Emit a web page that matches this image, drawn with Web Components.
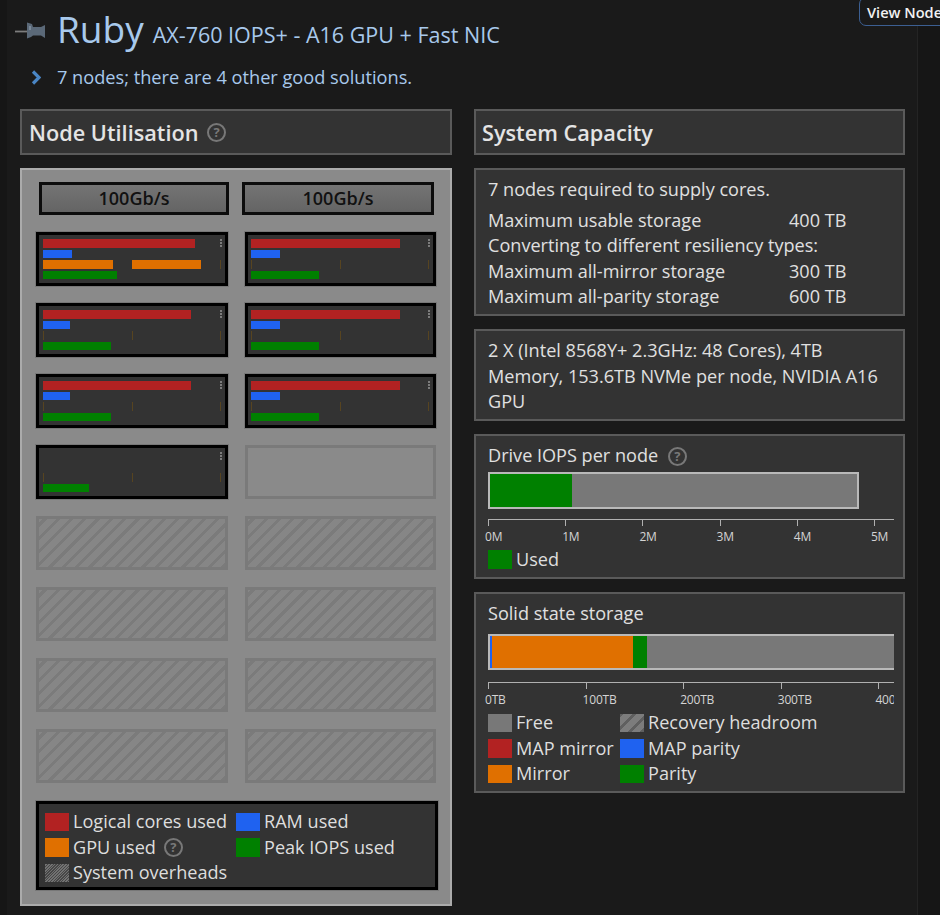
<!DOCTYPE html>
<html>
<head>
<meta charset="utf-8">
<style>
  html, body { margin: 0; height: 915px; overflow: hidden; background: #161616; }
  body { font-family: "Open Sans", "Liberation Sans", sans-serif; color: #e2e2e2; }
</style>
</head>
<body>
<sizer-app>
  <sizer-title slot="title" name="Ruby" spec="AX-760 IOPS+ - A16 GPU + Fast NIC" summary="7 nodes; there are 4 other good solutions."></sizer-title>

  <sizer-heading slot="left">Node Utilisation <sizer-help></sizer-help></sizer-heading>
  <node-panel slot="left">
    <net-box slot="net">100Gb/s</net-box>
    <net-box slot="net">100Gb/s</net-box>
    <node-card cpu="152" ram="29" gpu="71,70" iops="74"></node-card>
    <node-card inset="3" cpu="149" ram="29" iops="68"></node-card>
    <node-card cpu="148" ram="27" iops="68"></node-card>
    <node-card inset="3" cpu="149" ram="29" iops="68"></node-card>
    <node-card cpu="148" ram="27" iops="68"></node-card>
    <node-card inset="3" cpu="149" ram="29" iops="68"></node-card>
    <node-card iops="46"></node-card>
    <node-card kind="empty"></node-card>
    <node-card kind="hatch"></node-card>
    <node-card kind="hatch"></node-card>
    <node-card kind="hatch"></node-card>
    <node-card kind="hatch"></node-card>
    <node-card kind="hatch"></node-card>
    <node-card kind="hatch"></node-card>
    <node-card kind="hatch"></node-card>
    <node-card kind="hatch"></node-card>
    <legend-key slot="legend" color="#b22222">Logical cores used</legend-key>
    <legend-key slot="legend" color="#1f62f0">RAM used</legend-key>
    <legend-key slot="legend" color="#e07000">GPU used <sizer-help style="margin-left:8px"></sizer-help></legend-key>
    <legend-key slot="legend" color="#008000">Peak IOPS used</legend-key>
    <legend-key slot="legend" pattern="fine">System overheads</legend-key>
  </node-panel>

  <sizer-heading slot="right" style="padding-left:6px">System Capacity</sizer-heading>
  <info-box slot="right" style="height:148px">
    <div style="margin-bottom:5px">7 nodes required to supply cores.</div>
    <stat-row label="Maximum usable storage" value="400 TB"></stat-row>
    <div>Converting to different resiliency types:</div>
    <stat-row label="Maximum all-mirror storage" value="300 TB"></stat-row>
    <stat-row label="Maximum all-parity storage" value="600 TB"></stat-row>
  </info-box>
  <info-box slot="right" style="height:92px">2 X (Intel 8568Y+ 2.3GHz: 48 Cores), 4TB Memory, 153.6TB NVMe per node, NVIDIA A16 GPU</info-box>
  <info-box slot="right" style="height:145px">
    <usage-chart bar-width="371" bar-height="37" closed segments="#008000:82" ticks="0M,1M,2M,3M,4M,5M" step="77.2" gap="3" axis-gap="10">
      <span slot="title">Drive IOPS per node <sizer-help style="margin-left:5px;vertical-align:1px"></sizer-help></span>
      <legend-key color="#008000">Used</legend-key>
    </usage-chart>
  </info-box>
  <info-box slot="right" style="height:201px">
    <usage-chart bar-width="406" bar-height="36" segments="#1f62f0:1.5,#e07000:141.5,#008000:14" ticks="0TB,100TB,200TB,300TB,400TB" step="97.6" gap="7" axis-gap="12.5">
      <span slot="title">Solid state storage</span>
      <legend-key color="#787878">Free</legend-key>
      <legend-key pattern="wide">Recovery headroom</legend-key>
      <legend-key color="#b22222">MAP mirror</legend-key>
      <legend-key color="#1f62f0">MAP parity</legend-key>
      <legend-key color="#e07000">Mirror</legend-key>
      <legend-key color="#008000">Parity</legend-key>
    </usage-chart>
  </info-box>

  <view-button slot="overlay">View Node</view-button>
</sizer-app>

<script>
const define = (name, css, html, extra = {}) => {
  customElements.define(name, class extends HTMLElement {
    constructor () {
      super()
      this.attachShadow({ mode: 'open' }).innerHTML = `<style>${css}</style>${html}`
    }
    connectedCallback () {
      if (extra.render) extra.render.call(this, this.shadowRoot)
    }
  })
}

define('sizer-app', `
  :host { display: block; position: relative; width: 940px; height: 915px; overflow: hidden; }
  main { box-sizing: border-box; margin-left: 7px; width: 911px; height: 915px; background: #1a1a1a;
    border-right: 1px solid #242424; padding-left: 13px; }
  .cols { display: grid; grid-template-columns: 432px 431px; column-gap: 22px; margin-top: 0; }
  .col { display: flex; flex-direction: column; gap: 13px; }
`, `
  <main>
    <slot name="title"></slot>
    <div class="cols">
      <div class="col"><slot name="left"></slot></div>
      <div class="col"><slot name="right"></slot></div>
    </div>
  </main>
  <slot name="overlay"></slot>
`)

define('sizer-title', `
  :host { display: block; height: 109px; color: #a8c9ec; margin-left: -13px; }
  .top { display: flex; align-items: baseline; height: 58px; }
  svg.pin { align-self: flex-start; margin: 22px 11px 0 8px; flex: none; }
  .name { font-size: 37px; line-height: 58px; }
  .spec { font-size: 21.5px; margin-left: 9px; }
  .sub { display: flex; align-items: center; height: 38px; font-size: 18.2px; margin-top: 0; }
  .sub svg { margin: 0 16px 0 24px; }
`, `
  <div class="top">
    <svg class="pin" width="31" height="18" viewBox="0 0 31 18">
      <path d="M0 9.5 H13" stroke="#7d7d7d" stroke-width="1.8"/>
      <path d="M12 0.5 L17 2 L18 5 H26 L30 3 V16 L26 13.5 H18 L16 15 L12 16.5 Z" fill="#5b6978"/>
      <path d="M15 4 V8" stroke="#8494a4" stroke-width="1.5"/>
    </svg>
    <span class="name"></span><span class="spec"></span>
  </div>
  <div class="sub">
    <svg width="10" height="15" viewBox="0 0 10 15"><path d="M2 1.5 L8 7.5 L2 13.5" fill="none" stroke="#4a86c5" stroke-width="3.2"/></svg>
    <span class="summary"></span>
  </div>
`, {
  render (root) {
    root.querySelector('.name').textContent = this.getAttribute('name')
    root.querySelector('.spec').textContent = this.getAttribute('spec')
    root.querySelector('.summary').textContent = this.getAttribute('summary')
  }
})

define('sizer-heading', `
  :host { box-sizing: border-box; display: flex; align-items: center; height: 46px; background: #333; padding-top: 1px;
    border: 2px solid #5a5a5a; padding-left: 7px; font-size: 21.7px; font-weight: 600; color: #e4e4e4; white-space: pre; }
  ::slotted(sizer-help) { margin-left: 3px; }
`, `<slot></slot>`)

define('sizer-help', `
  :host { display: inline-flex; box-sizing: border-box; width: 19px; height: 19px; border: 2px solid #787878; border-radius: 50%;
    align-items: center; justify-content: center; vertical-align: -3px; color: #787878; font-size: 13px; font-weight: 700; line-height: 1;
    font-family: "Open Sans", sans-serif; }
`, `?`)

define('node-panel', `
  :host { display: block; box-sizing: border-box; height: 738px; background: #8a8a8a; border: 2px solid #ababab; padding: 12px 12px 0 14px; }
  .net { display: grid; grid-template-columns: 190px 192px; column-gap: 13px; margin: 0 0 17px 3px; }
  .grid { display: grid; grid-template-columns: 192px 191px; column-gap: 17px; row-gap: 17px; }
  .legend { box-sizing: border-box; width: 402px; height: 89px; margin-top: 18px; background: #333; border: 3px solid #000;
    box-shadow: 0 0 0 1px #777; padding: 5px 0 0 6px; display: grid; grid-template-columns: 191px auto; grid-auto-rows: 25.5px; }
`, `
  <div class="net"><slot name="net"></slot></div>
  <div class="grid"><slot></slot></div>
  <div class="legend"><slot name="legend"></slot></div>
`)

define('net-box', `
  :host { display: flex; box-sizing: border-box; height: 33px; padding-bottom: 2px; align-items: center; justify-content: center; background: linear-gradient(#747474, #646464);
    border: 3px solid #0c0c0c; font-size: 18px; font-weight: 600; color: #111; }
`, `<slot></slot>`)

define('node-card', `
  :host { display: block; box-sizing: border-box; height: 54px; position: relative; }
  .live { box-sizing: border-box; height: 54px; background: #333; border: 3px solid #000; box-shadow: 0 0 0 1px #777;
    padding: 4px 0 0 4px; display: grid; grid-auto-rows: 8.5px; row-gap: 2px; }
  .bar { height: 100%; }
  .gpu { display: flex; }
  .gpu div { width: 88.7px; height: 100%; box-sizing: border-box; border-left: 1.5px solid #574420; flex: none; }
  .gpu i { display: block; height: 100%; background: #e07000; }
  .dots { position: absolute; right: 6px; top: 7px; width: 2px; height: 8px;
    background: repeating-linear-gradient(#7c7c7c 0 2px, transparent 2px 3.2px); }
  .empty, .hatch { box-sizing: border-box; height: 54px; border: 3px solid #7a7a7a; background: #8a8a8a; }
  .hatch { background: repeating-linear-gradient(-45deg, #7b7b7b 0 3px, #868686 3px 9.4px); }
`, ``, {
  render (root) {
    const kind = this.getAttribute('kind')
    const wrap = document.createElement('div')
    if (kind) {
      wrap.className = kind
    } else {
      wrap.className = 'live'
      wrap.style.paddingLeft = (this.getAttribute('inset') || 4) + 'px'
      const gpu = (this.getAttribute('gpu') || '').split(',').filter(Boolean)
      const widths = [gpu[0], gpu[1], '']
      wrap.innerHTML = `
        <div class="bar" style="width:${this.getAttribute('cpu') || 0}px;background:#b22222"></div>
        <div class="bar" style="width:${this.getAttribute('ram') || 0}px;background:#1f62f0"></div>
        <div class="gpu">${widths.map(w => w
          ? `<div style="border-color:#e07000"><i style="width:${w - 2}px"></i></div>`
          : '<div></div>').join('')}</div>
        <div class="bar" style="width:${this.getAttribute('iops') || 0}px;background:#008000"></div>
        <span class="dots"></span>`
    }
    root.appendChild(wrap)
  }
})

define('legend-key', `
  :host { display: flex; align-items: center; font-size: 18.1px; white-space: nowrap; line-height: 25.5px; height: 25.5px; color: #dedede; }
  .sw { flex: none; box-sizing: border-box; width: 24px; height: 18.5px; margin-right: 4px; }
  .fine { background: repeating-linear-gradient(-45deg, #727272 0 1px, #474747 1px 2px); }
  .wide { background: repeating-linear-gradient(-45deg, #5f5f5f 0 3px, #7c7c7c 3px 9px); }
`, `<span class="sw"></span><slot></slot>`, {
  render (root) {
    const sw = root.querySelector('.sw')
    const pattern = this.getAttribute('pattern')
    if (pattern) sw.className = 'sw ' + pattern
    else sw.style.background = this.getAttribute('color')
  }
})

define('info-box', `
  :host { display: block; box-sizing: border-box; background: #333; border: 2px solid #5a5a5a; padding: 7px 9px 4px 12px;
    font-size: 18.1px; line-height: 25.5px; color: #e0e0e0; }
`, `<slot></slot>`)

define('stat-row', `
  :host { display: grid; grid-template-columns: 301px auto; }
`, `<span class="l"></span><span class="v"></span>`, {
  render (root) {
    root.querySelector('.l').textContent = this.getAttribute('label')
    root.querySelector('.v').textContent = this.getAttribute('value')
  }
})

define('usage-chart', `
  :host { display: block; }
  .clip { width: 406px; overflow: hidden; margin-left: -3px; padding-left: 3px; }
  .bar { display: flex; box-sizing: border-box; background: #787878; border: 2px solid #b9b9b9; }
  :host(:not([closed])) .bar { border-right: 0; }
  .bar i { display: block; height: 100%; }
  .axis { display: flex; height: 8px; border-top: 1.5px solid #b0b0b0; box-sizing: border-box; width: 406px; }
  .axis b { display: block; box-sizing: border-box; flex: none; border-left: 1.5px solid #b0b0b0; height: 6px; }
  .labels { display: flex; font-size: 12px; letter-spacing: -0.2px; line-height: 16px; color: #d4d4d4; margin: 2px 0 0 -3px; white-space: nowrap; width: 409px; overflow: hidden; }
  .labels span { flex: none; }
  .title { display: block; }
  .keys { display: grid; grid-template-columns: 132px auto; margin-top: 2px; }
`, `
  <slot class="title" name="title"></slot>
  <div class="clip">
    <div class="bar"></div>
    <div class="axis"></div>
    <div class="labels"></div>
  </div>
  <div class="keys"><slot></slot></div>
`, {
  render (root) {
    const bar = root.querySelector('.bar')
    bar.style.width = this.getAttribute('bar-width') + 'px'
    bar.style.height = this.getAttribute('bar-height') + 'px'
    bar.style.marginTop = this.getAttribute('gap') + 'px'
    this.getAttribute('segments').split(',').forEach(s => {
      const [color, width] = s.split(':')
      const seg = document.createElement('i')
      seg.style.cssText = `width:${width}px;background:${color}`
      bar.appendChild(seg)
    })
    const step = +this.getAttribute('step')
    const axis = root.querySelector('.axis')
    const labels = root.querySelector('.labels')
    axis.style.marginTop = this.getAttribute('axis-gap') + 'px'
    this.getAttribute('ticks').split(',').forEach(t => {
      const tick = document.createElement('b')
      tick.style.width = step + 'px'
      axis.appendChild(tick)
      const label = document.createElement('span')
      label.style.width = step + 'px'
      label.textContent = t
      labels.appendChild(label)
    })
  }
})

define('view-button', `
  :host { position: absolute; left: 859px; top: -3px; box-sizing: border-box; height: 29px; padding: 4px 10px 0 7px; white-space: nowrap;
    border: 1.5px solid #3c5f92; border-radius: 7px; background: #1a1a1a; color: #f2f2f2; font-size: 14.6px; font-weight: 600; }
`, `<slot></slot>`)
</script>
</body>
</html>
